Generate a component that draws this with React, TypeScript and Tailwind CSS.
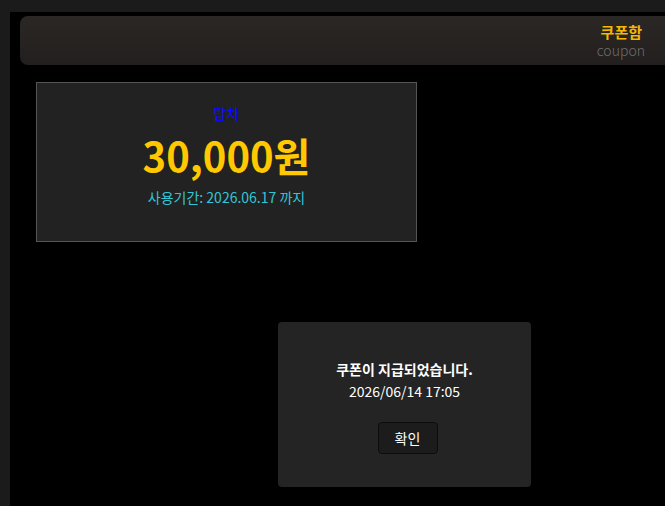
export default function App() {
  return (
    <div
      className="relative h-[506px] w-[665px] overflow-hidden bg-[#1b1b1b] pl-[10px] pt-[12px]"
      style={{ fontFamily: '"Noto Sans CJK KR", "Noto Sans", sans-serif' }}
    >
      <div className="h-full bg-black pl-[10px] pt-[4px]">
        <header className="-mr-[20px] flex h-[49px] flex-col items-end justify-center rounded-[8px] bg-gradient-to-b from-[#2a2725] to-[#221f1e] pr-[43px] leading-none">
          <span className="text-[15px] font-bold text-[#f5b700]">쿠폰함</span>
          <span className="mt-[4px] mr-[-3px] text-[14px] font-light text-[#6e6e6e]">coupon</span>
        </header>

        <section className="ml-[16px] mt-[17px] flex h-[160px] w-[381px] flex-col items-center border border-[#555] bg-[#222]">
          <p className="mt-[23px] text-[14px] font-medium leading-none text-[#0a0aff]">탑차</p>
          <p className="mt-[15px] text-[40px] font-bold leading-none text-[#ffc800]">30,000원</p>
          <p className="mt-[15px] text-[14px] leading-none text-[#33c6d6]">사용기간: 2026.06.17 까지</p>
        </section>
      </div>

      <div className="absolute left-[278px] top-[322px] flex h-[165px] w-[253px] flex-col items-center rounded-[4px] bg-[#242424] text-white">
        <p className="mt-[40px] text-[14px] font-bold leading-none">쿠폰이 지급되었습니다.</p>
        <p className="mt-[8px] text-[14px] leading-none">2026/06/14 17:05</p>
        <button className="ml-[6px] mt-[24px] h-[32px] w-[60px] rounded-[4px] border border-[#0c0c0c] bg-[#1c1c1c] text-[14px] text-white">
          확인
        </button>
      </div>
    </div>
  );
}
